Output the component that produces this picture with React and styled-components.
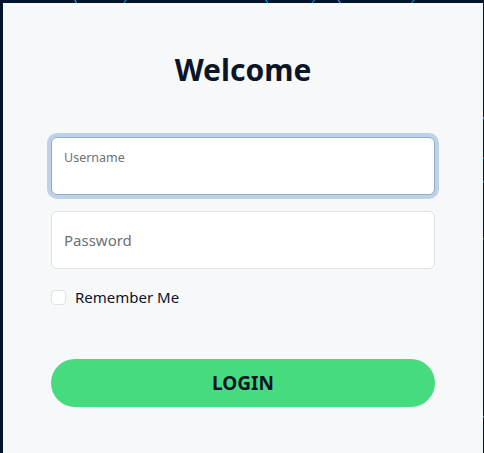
import React, { useState } from 'react';
import styled, { createGlobalStyle } from 'styled-components';

const Night = '#011429';
const Ink = '#0b1529';
const Paper = '#f7f8fa';
const Line = '#dee2e6';
const Mint = '#45db7e';

const GlobalStyle = createGlobalStyle`
  html, body {
    margin: 0;
    padding: 0;
    background: ${Night};
    font-family: "Noto Sans", "Open Sans", "Liberation Sans", sans-serif;
  }
  * { box-sizing: border-box; }
`;

const Stage = styled.div`
  position: relative;
  width: 484px;
  height: 453px;
  overflow: hidden;
  padding: 3px 1px 0 3px;
`;

// the network drawing behind the card
const Backdrop = styled.svg`
  position: absolute;
  inset: 0;
  width: 100%;
  height: 100%;
`;

const Card = styled.form`
  position: relative;
  display: flex;
  flex-direction: column;
  height: 100%;
  padding: 49px 48px 0 48px;
  background: ${Paper};
`;

const Title = styled.h1`
  margin: 0 0 49px 0;
  font-size: 30px;
  font-weight: 700;
  line-height: 1.2;
  text-align: center;
  color: ${Ink};
`;

const Field = styled.div`
  position: relative;
  margin-bottom: ${props => props.gap || '16px'};
`;

const Input = styled.input`
  display: block;
  width: 100%;
  height: 58px;
  padding: ${props => props.floating ? '25px 12px 8px' : '16px 12px'};
  font: inherit;
  font-size: 15px;
  color: ${Ink};
  background: #fff;
  border: 1px solid ${props => props.focused ? '#8cadd3' : Line};
  border-radius: 6px;
  outline: none;
  box-shadow: ${props => props.focused ? '0 0 0 4px #bed1e6' : 'none'};

  &::placeholder {
    color: #6c7075;
  }
`;

const FloatLabel = styled.label`
  position: absolute;
  top: 12px;
  left: 13px;
  font-size: 12.5px;
  color: #6c7075;
  pointer-events: none;
`;

const CheckRow = styled.label`
  display: flex;
  align-items: center;
  gap: 9px;
  height: 24px;
  font-size: 15px;
  color: ${Ink};
`;

const Box = styled.span`
  width: 15px;
  height: 15px;
  border: 1px solid ${Line};
  border-radius: 4px;
  background: #fff;
`;

const LoginButton = styled.button`
  margin-top: 50px;
  height: 48px;
  border: none;
  border-radius: 24px;
  background: ${Mint};
  color: ${Ink};
  font: inherit;
  font-size: 19px;
  font-weight: 700;
  cursor: pointer;
`;

const strands = [
  [60, -30, 95, 40],
  [140, -20, 105, 30],
  [250, -25, 285, 30],
  [330, -20, 295, 25],
  [320, -25, 360, 30],
  [430, -20, 390, 30],
  [470, 100, 500, 140],
  [500, 150, 470, 165],
  [470, 175, 500, 190],
  [500, 225, 470, 250],
  [470, 410, 500, 425],
];

export default function App() {
  const [user, setUser] = useState('');
  const [pass, setPass] = useState('');

  return (
    <Stage>
      <GlobalStyle />
      <Backdrop viewBox="0 0 484 453" preserveAspectRatio="none">
        {strands.map(([x1, y1, x2, y2], i) => (
          <line key={i} x1={x1} y1={y1} x2={x2} y2={y2} stroke={i % 2 ? '#1f7fbf' : '#2a9ee0'} strokeWidth="1.2" />
        ))}
      </Backdrop>
      <Card onSubmit={e => e.preventDefault()}>
        <Title>Welcome</Title>
        <Field>
          <Input floating focused value={user} onChange={e => setUser(e.target.value)} />
          <FloatLabel>Username</FloatLabel>
        </Field>
        <Field>
          <Input type="password" placeholder="Password" value={pass} onChange={e => setPass(e.target.value)} />
        </Field>
        <CheckRow>
          <Box />
          Remember Me
        </CheckRow>
        <LoginButton type="submit">LOGIN</LoginButton>
      </Card>
    </Stage>
  );
}
